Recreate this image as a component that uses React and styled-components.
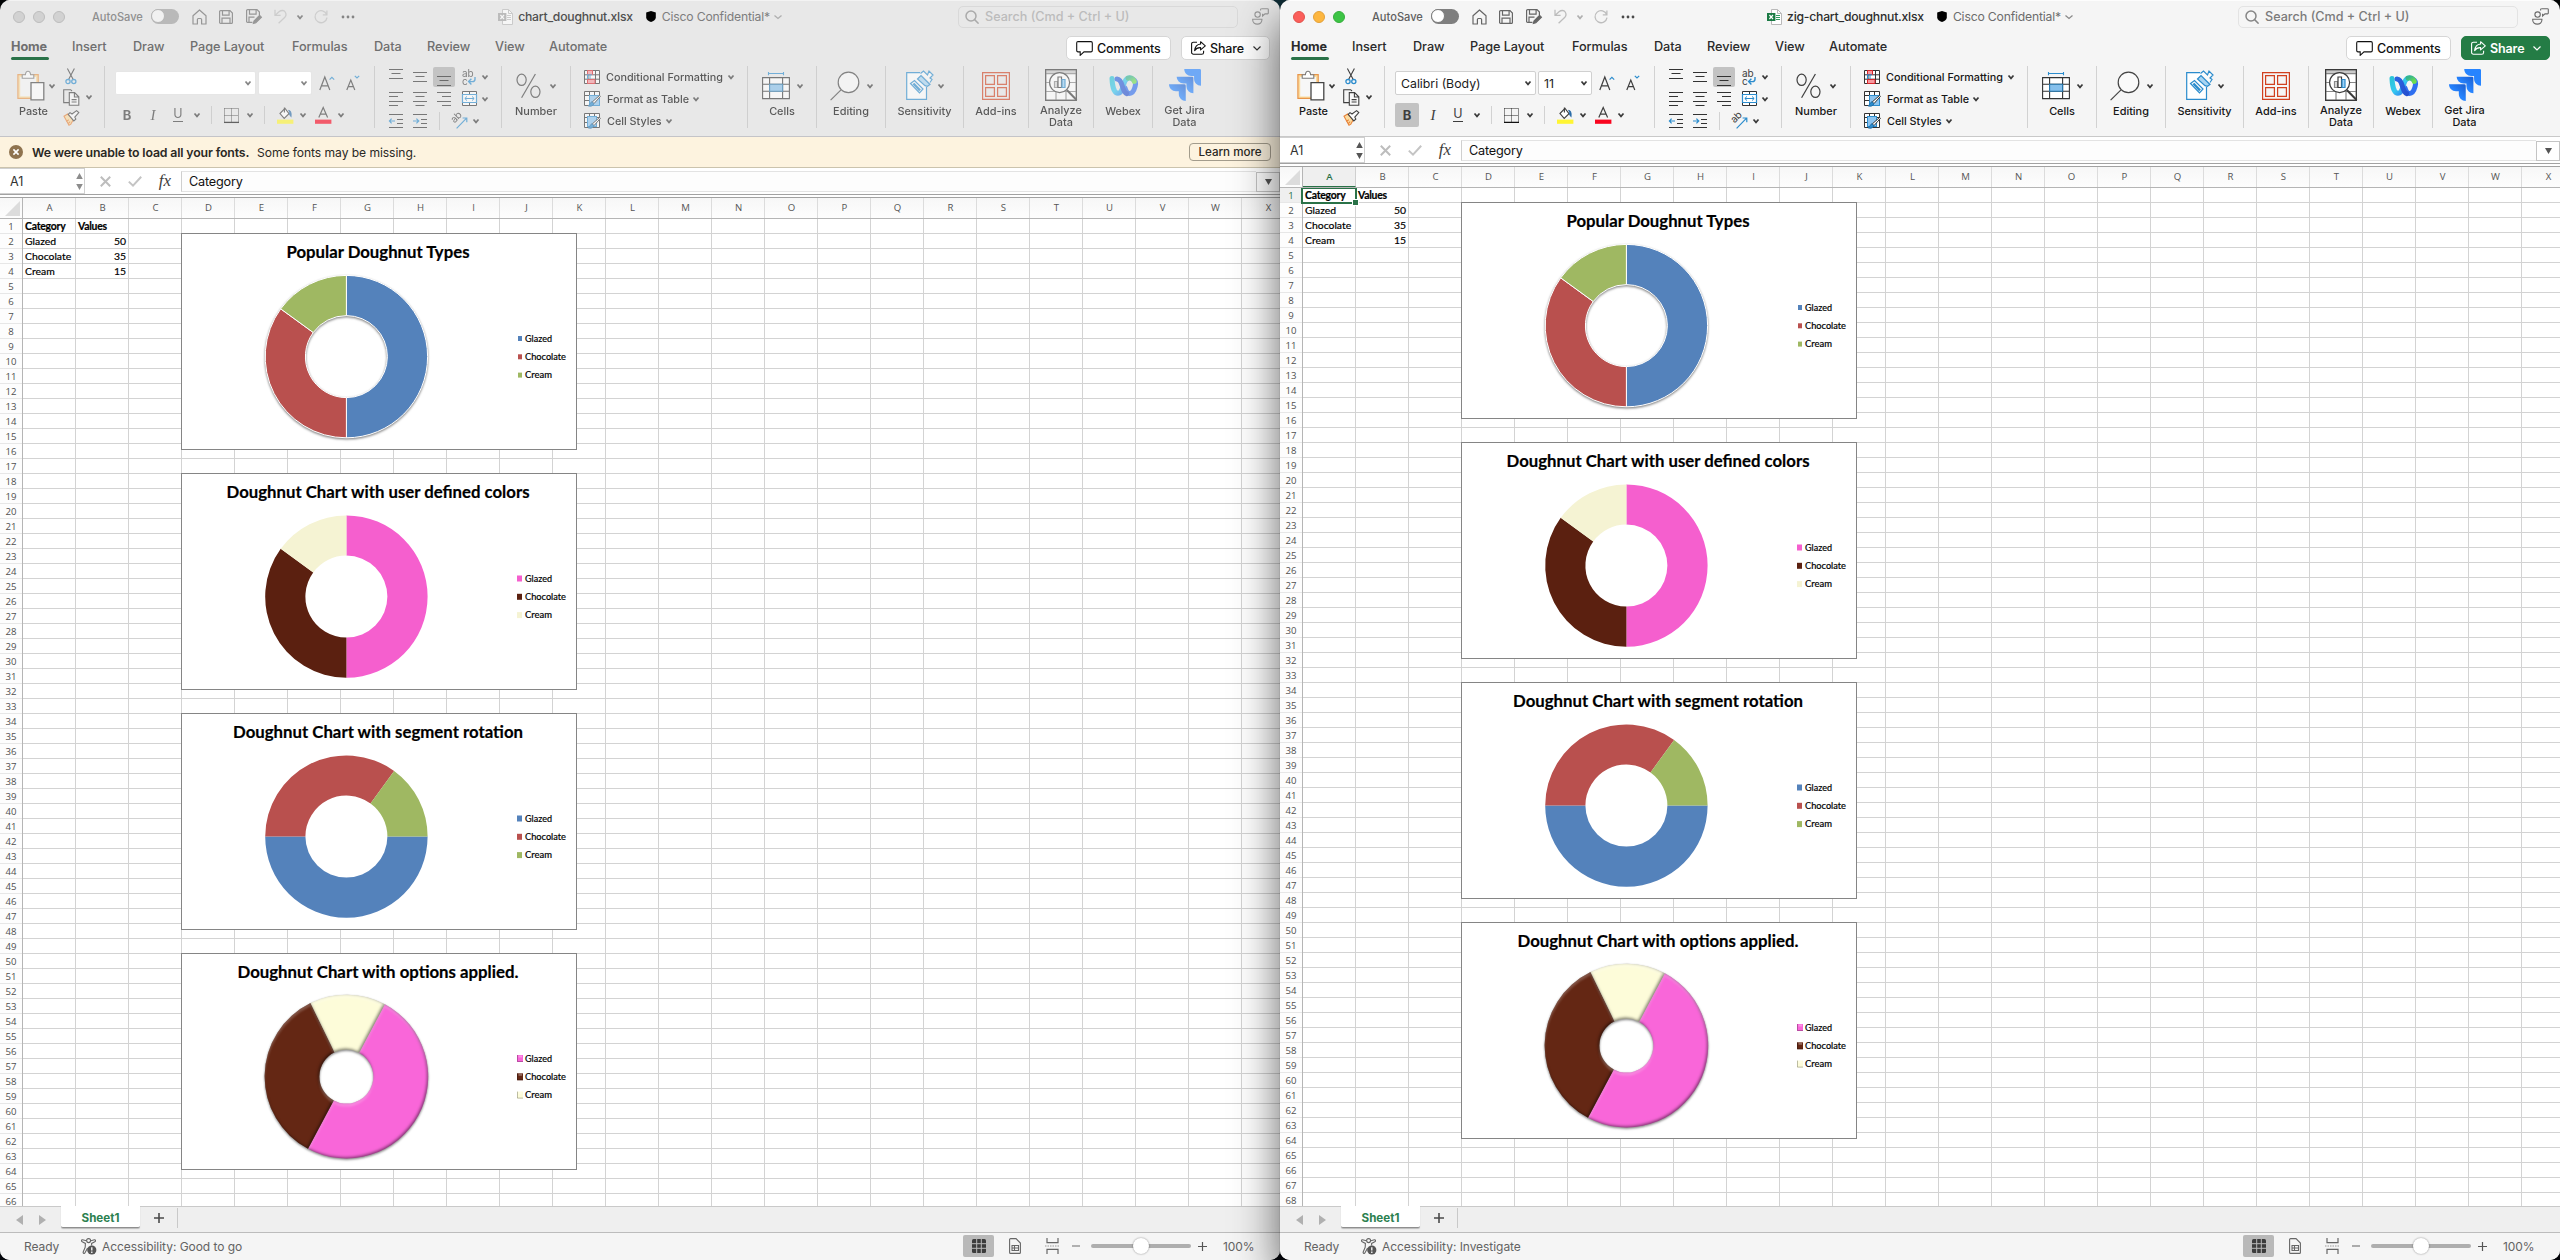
import React, { useId } from "react";
import styled, { createGlobalStyle, ThemeProvider, css } from "styled-components";

const UI = `Inter, "Liberation Sans", sans-serif`;
const CELL = `Lato, "Open Sans", sans-serif`;
const HEAD = `"Open Sans", "Noto Sans", sans-serif`;

const active = {
  on: true,
  chrome: "#f5f5f5",
  text: "#2a2a2a",
  label: "#161616",
  dim: 1,
  sep: "#d2d2d2",
  title: "#2c2c2c",
  sub: "#6c6c6c",
  search: "#7b7b7b",
  searchBorder: "#e3e3e3",
};
const inactive = {
  on: false,
  chrome: "#e8e8e8",
  text: "#6f6f6f",
  label: "#2a2a2a",
  dim: 0.62,
  sep: "#cfcfcf",
  title: "#4f4f4f",
  sub: "#7d7d7d",
  search: "#bcbcbc",
  searchBorder: "#d9d9d9",
};

const Global = createGlobalStyle`
  *, *::before, *::after { box-sizing: border-box; }
  body { margin: 0; background: #05090c; overflow: hidden; }
`;

const Desktop = styled.div`
  display: flex;
  width: 2560px;
  height: 1260px;
  overflow: hidden;
  background: linear-gradient(90deg, #020405 0%, #0e2c35 45%, #0e2c35 55%, #020405 100%) top / 100% 40px no-repeat, #03050a;
  font-family: ${UI};
`;

const Frame = styled.section`
  position: relative;
  display: flex;
  flex-direction: column;
  width: 1280px;
  height: 1260px;
  flex: none;
  border-radius: 10px;
  background: ${(p) => p.theme.chrome};
  z-index: ${(p) => (p.theme.on ? 1 : 0)};
  box-shadow: ${(p) => (p.theme.on ? "0 20px 46px rgba(0,0,0,.62), 0 0 1px rgba(0,0,0,.6)" : "none")};
`;

const Clip = styled.div`
  display: flex;
  flex-direction: column;
  height: 100%;
  border-radius: 10px;
  overflow: hidden;
`;

/* ---------- title bar ---------- */

const TitleBar = styled.header`
  display: grid;
  grid-template-columns: 400px 480px 400px;
  height: 32px;
  flex: none;
  border-top: 1px solid ${(p) => (p.theme.on ? "#fdfdfd" : "#f3f3f3")};
`;

const TitleLeft = styled.div`
  display: flex;
  align-items: center;
  padding-left: 13px;
`;

const Light = styled.i`
  width: 12px;
  height: 12px;
  margin-right: 8px;
  border-radius: 50%;
  background: ${(p) => (p.theme.on ? p.$c : "#d2d2d2")};
  border: 1px solid ${(p) => (p.theme.on ? p.$b : "#bdbdbd")};
`;

const AutoSave = styled.span`
  width: 59px;
  margin-left: 19px;
  font-size: 11.1px;
  font-weight: 500;
  color: ${(p) => (p.theme.on ? "#5f5f5f" : "#8f8f8f")};
`;

const Toggle = styled.span`
  display: flex;
  width: 28px;
  height: 15px;
  margin-right: 12px;
  border-radius: 8px;
  background: ${(p) => (p.theme.on ? "#7f7f7f" : "#b9b9b9")};
  &::before {
    content: "";
    width: 14px;
    height: 14px;
    border-radius: 50%;
    background: ${(p) => (p.theme.on ? "#fff" : "#f1f1f1")};
    border: 1px solid ${(p) => (p.theme.on ? "#7c7c7c" : "#b5b5b5")};
  }
`;

const Slot = styled.span`
  display: flex;
  align-items: center;
  justify-content: ${(p) => (p.$start ? "flex-start" : "center")};
  flex: none;
  width: ${(p) => p.$w}px;
  height: ${(p) => (p.$h ? p.$h + "px" : "auto")};
`;

const Svg = styled.svg`
  display: block;
  flex: none;
  overflow: visible;
  opacity: ${(p) => p.theme.dim};
`;

const Doc = styled.div`
  display: flex;
  align-items: center;
  justify-content: center;
  white-space: nowrap;
`;

const FileName = styled.span`
  margin: 0 13px 0 5px;
  font-size: 12.2px;
  font-weight: 500;
  letter-spacing: -0.22px;
  color: ${(p) => p.theme.title};
`;

const Confidential = styled.span`
  margin: 0 4px 0 6px;
  font-size: 12.2px;
  letter-spacing: -0.18px;
  color: ${(p) => p.theme.sub};
`;

const TitleRight = styled.div`
  display: flex;
  align-items: center;
  padding-left: 78px;
`;

const Search = styled.div`
  display: flex;
  align-items: center;
  gap: 6px;
  width: 280px;
  height: 22px;
  margin-right: 14px;
  padding-left: 6px;
  border: 1px solid ${(p) => p.theme.searchBorder};
  border-radius: 5px;
  font-size: 12.6px;
  font-weight: 500;
  color: ${(p) => p.theme.search};
`;

/* ---------- tabs ---------- */

const TabRow = styled.nav`
  display: flex;
  justify-content: space-between;
  height: 34px;
  flex: none;
  padding: 4px 10px 0 11px;
`;

const Tabs = styled.div`
  display: flex;
`;

const Tab = styled.span`
  display: flex;
  align-items: center;
  width: ${(p) => p.$w}px;
  height: 21px;
  font-size: 12.7px;
  font-weight: ${(p) => (p.$on ? 700 : 500)};
  letter-spacing: ${(p) => (p.$on ? "-0.1px" : "-0.05px")};
  white-space: nowrap;
  color: ${(p) => p.theme.text};
`;

const HomeTab = styled.div`
  width: 61px;
  &::after {
    content: "";
    display: block;
    width: 38px;
    height: 3px;
    border-radius: 2px;
    background: #2a7248;
  }
`;

const Actions = styled.div`
  display: flex;
  gap: 10px;
`;

const ActionButton = styled.button`
  display: flex;
  align-items: center;
  gap: 4px;
  width: ${(p) => p.$w}px;
  height: 24px;
  padding: 0 0 0 9px;
  border: 1px solid ${(p) => (p.$primary ? "#247c45" : "#d6d6d6")};
  border-radius: 5px;
  background: ${(p) => (p.$primary ? "#247c45" : "#fff")};
  color: ${(p) => (p.$primary ? "#fff" : "#111")};
  font: ${(p) => (p.$primary ? 600 : 500)} 12.5px ${UI};
  letter-spacing: -0.12px;
`;

/* ---------- ribbon ---------- */

const Ribbon = styled.div`
  display: flex;
  height: 71px;
  flex: none;
  border-bottom: 1px solid ${(p) => (p.theme.on ? "#c9c9c9" : "#c4c4c8")};
`;

const Group = styled.div`
  display: flex;
  flex-direction: ${(p) => (p.$col ? "column" : "row")};
  width: ${(p) => p.$w}px;
  height: 62px;
  flex: none;
  border-right: ${(p) => (p.$last ? "none" : `1px solid ${p.theme.sep}`)};
`;

const BigButton = styled.div`
  display: flex;
  flex-direction: column;
  align-items: center;
  width: 100%;
`;

const BigIcon = styled.div`
  display: flex;
  align-items: center;
  justify-content: center;
  gap: ${(p) => p.$gap || 7}px;
  height: 39px;
`;

const Label = styled.span`
  font-size: 10.9px;
  line-height: 12px;
  font-weight: 500;
  text-align: center;
  white-space: pre;
  color: ${(p) => p.theme.label};
  opacity: ${(p) => (p.theme.on ? 1 : 0.75)};
`;

const PasteCol = styled.div`
  display: flex;
  flex-direction: column;
  width: 58px;
  padding-left: 17px;
`;

const PasteIcon = styled.div`
  display: flex;
  align-items: center;
  gap: 4px;
  height: 39px;
`;

const PasteLabel = styled(Label)`
  text-align: left;
  padding-left: 2px;
`;

const ClipCol = styled.div`
  display: flex;
  flex-direction: column;
  width: 34px;
  padding-left: 5px;
`;

const ClipRow = styled.div`
  display: flex;
  align-items: center;
  gap: 6px;
  height: 21.5px;
`;

const FontRow = styled.div`
  display: flex;
  align-items: center;
  height: 24px;
  margin: 5px 0 0 10px;
`;

const FormatRow = styled(FontRow)`
  margin-top: 8px;
`;

const Combo = styled.div`
  display: flex;
  align-items: center;
  justify-content: space-between;
  width: ${(p) => p.$w}px;
  height: 24px;
  margin-right: ${(p) => p.$mr}px;
  padding: 0 4px 0 5px;
  border: 1px solid ${(p) => (p.theme.on ? "#d0d0d0" : "#e6e6e6")};
  border-radius: 2px;
  background: #fff;
  font-size: 12.3px;
  color: #1b1b1b;
`;

const Toggled = styled.span`
  display: flex;
  align-items: center;
  justify-content: center;
  width: ${(p) => p.$w}px;
  height: ${(p) => p.$h}px;
  border-radius: 2px;
  background: ${(p) => (p.$on ? "#c3c3c3" : "transparent")};
`;

const Glyph = styled.span`
  font-size: ${(p) => p.$s || 13}px;
  line-height: 1;
  font-weight: ${(p) => p.$b || 400};
  font-style: ${(p) => (p.$i ? "italic" : "normal")};
  font-family: ${(p) => (p.$serif ? `"Liberation Serif", serif` : UI)};
  color: #3d3d3d;
  opacity: ${(p) => p.theme.dim};
  ${(p) => p.$u && css`border-bottom: 1px solid #3d3d3d;`}
`;

const Divider = styled.i`
  width: 1px;
  height: ${(p) => p.$h}px;
  background: ${(p) => p.theme.sep};
`;

const AlignRow = styled.div`
  display: flex;
  align-items: center;
  height: ${(p) => p.$h}px;
  flex: none;
  padding-left: 9px;
`;

const StyleRow = styled.div`
  display: flex;
  align-items: center;
  height: 22px;
  flex: none;
  padding-left: 13px;
  gap: 6px;
`;

const StyleText = styled.span`
  width: ${(p) => p.$w}px;
  font-size: 10.8px;
  font-weight: 500;
  white-space: nowrap;
  color: ${(p) => p.theme.label};
  opacity: ${(p) => (p.theme.on ? 1 : 0.75)};
`;

/* ---------- bars ---------- */

const Warning = styled.div`
  display: flex;
  align-items: center;
  height: 31px;
  flex: none;
  padding: 0 9px;
  background: #fdf3df;
  border-bottom: 1px solid #cbc3ad;
  color: #2a2824;
  font-size: 12.3px;
`;

const WarningStrong = styled.b`
  width: 225px;
  margin-left: 9px;
  font-weight: 600;
  letter-spacing: -0.14px;
  white-space: nowrap;
`;

const WarningText = styled.span`
  font-size: 12.1px;
  letter-spacing: -0.06px;
`;

const LearnMore = styled.button`
  width: 82px;
  height: 18px;
  margin-left: auto;
  padding: 0;
  border: 1px solid #a39c8c;
  border-radius: 4px;
  background: transparent;
  color: #2a2824;
  font: 500 11.6px ${UI};
`;

const FormulaBar = styled.div`
  display: flex;
  height: 30px;
  flex: none;
  background: #fff;
  border-bottom: 1px solid #a2a2a2;
`;

const FormulaMain = styled.div`
  display: flex;
  width: 100%;
  height: 27px;
  border-bottom: 1px solid #a2a2a2;
`;

const NameBox = styled.div`
  display: flex;
  align-items: center;
  justify-content: space-between;
  width: 85px;
  height: 26px;
  padding: 0 1px 0 10px;
  border: 1px solid #d0d0d0;
  border-left: none;
  font-size: 12.6px;
  color: #333;
`;

const Tools = styled.div`
  display: flex;
  align-items: center;
  width: 96px;
  padding-left: 5px;
`;

const Fx = styled.span`
  width: 34px;
  text-align: center;
  font: italic 17px "Liberation Serif", serif;
  color: #3d3d3d;
`;

const FormulaInput = styled.div`
  display: flex;
  align-items: center;
  width: 1075px;
  height: 21px;
  margin-top: 3px;
  padding-left: 7px;
  border: 1px solid #e3e3e3;
  border-left-color: #cfcfcf;
  border-right: none;
  background: #fdfdfd;
  font-size: 12.7px;
  letter-spacing: -0.22px;
  color: #111;
`;

const DropButton = styled.span`
  display: flex;
  align-items: center;
  justify-content: center;
  width: 24px;
  height: 20px;
  margin-top: 4px;
  border: 1px solid #c4c4c4;
  background: #fff;
`;

/* ---------- sheet ---------- */

const ColumnHeads = styled.div`
  display: flex;
  height: 21px;
  flex: none;
  border-bottom: 1px solid #b5b5b5;
  background: linear-gradient(#f7f7f7, #fdfdfd);
  overflow: hidden;
`;

const Corner = styled.div`
  display: flex;
  justify-content: flex-end;
  align-items: flex-end;
  width: 23px;
  flex: none;
  padding: 0 2px 2px 0;
  border-right: 1px solid #b5b5b5;
`;

const ColumnHead = styled.div`
  display: flex;
  align-items: center;
  justify-content: center;
  width: 53px;
  flex: none;
  padding: 0 0 ${(p) => (p.$on ? 1 : 2)}px 1px;
  border-right: 1px solid ${(p) => (p.$on ? "#cfcfcf" : "#dcdcdc")};
  border-bottom: ${(p) => (p.$on ? "1px solid #2a7248" : "none")};
  background: ${(p) => (p.$on ? "#efefef" : "transparent")};
  font: ${(p) => (p.$on ? 600 : 500)} 9.6px ${HEAD};
  color: ${(p) => (p.$on ? "#2a7248" : "#555")};
`;

const Sheet = styled.div`
  position: relative;
  display: flex;
  flex: 1;
  min-height: 0;
  overflow: hidden;
  background: #fff;
`;

const RowHeads = styled.div`
  width: 23px;
  flex: none;
  border-right: 1px solid #b5b5b5;
  background: #fdfdfd;
`;

const RowHead = styled.div`
  height: 15px;
  border-bottom: 1px solid #e7e7e7;
  text-align: center;
  font: 500 9.6px/15px ${HEAD};
  color: ${(p) => (p.$on ? "#2a7248" : "#505050")};
  background: ${(p) => (p.$on ? "#efefef" : "transparent")};
`;

const Cells = styled.div`
  flex: 1;
  background:
    repeating-linear-gradient(90deg, transparent 0 52px, #d3d3d3 52px 53px),
    repeating-linear-gradient(180deg, transparent 0 14px, #d3d3d3 14px 15px);
`;

const DataRow = styled.div`
  display: grid;
  grid-template-columns: 53px 53px;
  height: 15px;
`;

const Cell = styled.span`
  padding: 0 3px 0 2px;
  font: ${(p) => (p.$b ? 700 : 400)} 10.4px/14px ${CELL};
  text-align: ${(p) => (p.$r ? "right" : "left")};
  letter-spacing: ${(p) => (p.$b ? "-0.22px" : "0")};
  white-space: nowrap;
  color: #000;
  -webkit-text-stroke: 0.2px #000;
`;

const Selection = styled.div`
  position: absolute;
  left: 21px;
  top: -1px;
  width: 56px;
  height: 17px;
  border: 2px solid #2a7248;
  &::after {
    content: "";
    position: absolute;
    right: -3px;
    bottom: -3px;
    width: 5px;
    height: 5px;
    background: #2a7248;
    box-shadow: 0 0 0 1px #fff;
  }
`;

const ChartBox = styled.figure`
  position: absolute;
  left: 181px;
  top: ${(p) => p.$top}px;
  width: 396px;
  height: 217px;
  margin: 0;
  border: 1px solid #858585;
  background: #fff;
`;

const ChartSvg = styled.svg`
  display: block;
  margin: -1px;
`;

/* ---------- footer ---------- */

const SheetTabs = styled.div`
  display: flex;
  height: 27px;
  flex: none;
  border-top: 1px solid #c9c9c9;
  border-bottom: 1px solid #bcbcbc;
  background: #efefef;
`;

const Arrows = styled.div`
  display: flex;
  align-items: center;
  justify-content: center;
  gap: 16px;
  width: 61px;
  padding-top: 1px;
`;

const SheetTab = styled.div`
  display: flex;
  align-items: center;
  justify-content: center;
  width: 79px;
  height: 22px;
  margin-top: -1px;
  padding-top: 3px;
  border-bottom: 1px solid #8f8f8f;
  border-radius: 0 0 2px 2px;
  background: #fff;
  box-shadow: 0 1px 1px rgba(0, 0, 0, 0.22);
  font-size: 11.6px;
  font-weight: 700;
  color: #2b8150;
`;

const AddSheet = styled.div`
  display: flex;
  align-items: center;
  justify-content: center;
  width: 38px;
  height: 20px;
  margin-top: 1px;
  border-right: 1px solid #c9c9c9;
`;

const Status = styled.footer`
  display: flex;
  align-items: center;
  height: 27px;
  flex: none;
  padding: 0 25px 1px 24px;
  background: #f5f5f5;
  font-size: 12px;
  color: #636363;
`;

const StatusText = styled.span`
  width: ${(p) => p.$w}px;
  white-space: nowrap;
  letter-spacing: -0.05px;
`;

const Views = styled.div`
  display: flex;
  align-items: center;
  margin-left: auto;
`;

const ViewOn = styled.span`
  display: flex;
  align-items: center;
  justify-content: center;
  width: 31px;
  height: 22px;
  border-radius: 2px;
  background: #b9b9b9;
`;

const Track = styled.div`
  display: flex;
  align-items: center;
  justify-content: center;
  width: 100px;
  height: 4px;
  margin: 0 6px 0 7px;
  border-radius: 2px;
  background: #aeaeae;
`;

const Knob = styled.i`
  width: 16px;
  height: 16px;
  border-radius: 50%;
  background: #fff;
  box-shadow: 0 0 2px rgba(0, 0, 0, 0.45);
`;

const Percent = styled.span`
  width: 32px;
  margin-left: 16px;
  letter-spacing: -0.1px;
`;

/* ---------- icons ---------- */

const Ic = ({ w, h, children, ...rest }) => (
  <Svg width={w} height={h} viewBox={`0 0 ${w} ${h}`} fill="none" stroke="#3f3f3f" strokeWidth="1" {...rest}>
    {children}
  </Svg>
);

const Chev = ({ c = "#3a3a3a", sw = 1.7, w = 6 }) => (
  <Ic w={w} h={4} stroke={c} strokeWidth={sw}>
    <path d={`M.5 .5 L${w / 2} 3.4 L${w - 0.5} .5`} />
  </Ic>
);

const grey = "#666";

const HomeIcon = () => (
  <Ic w={15} h={16} stroke={grey} strokeWidth="1.2">
    <path d="M1 6.8 7.5 1 14 6.8V15H9.6V10.5a1 1 0 0 0-1-1H6.4a1 1 0 0 0-1 1V15H1Z" strokeLinejoin="round" />
  </Ic>
);
const SaveIcon = () => (
  <Ic w={14} h={14} stroke={grey} strokeWidth="1.2">
    <path d="M1.6.6H11l2.4 2.4v9.4a1 1 0 0 1-1 1H1.6a1 1 0 0 1-1-1V1.6a1 1 0 0 1 1-1ZM3.5.8v4.4h6.6V.8M3 13.2V8.2h8v5" />
  </Ic>
);
const SaveEditIcon = () => (
  <Ic w={16} h={15} stroke={grey} strokeWidth="1.2">
    <path d="M6.5 13.4H1.6a1 1 0 0 1-1-1V1.6a1 1 0 0 1 1-1H11l2.4 2.4v3M3.5.8v4.4h6.6V.8M3 13.2V8.2h5.5" />
    <path d="m13.6 6.4 1.8 1.8-5.6 5.6-2.4.7.6-2.5Z" fill={grey} stroke={grey} />
  </Ic>
);
const UndoIcon = () => (
  <Ic w={13} h={15} stroke="#bdbdbd" strokeWidth="1.3">
    <path d="M1 .8V6.4H6.6M1.2 6.2 5 2.8C7.5.8 10 1.3 11.2 3c1.3 2 .9 4-.6 5.6L4.6 14.2" />
  </Ic>
);
const RedoIcon = () => (
  <Ic w={14} h={14} stroke="#bdbdbd" strokeWidth="1.3">
    <path d="M12.9 .6V4.8H8.8M12.7 4.6A6 6 0 1 0 13 7.6" />
  </Ic>
);
const MoreIcon = () => (
  <Ic w={14} h={4} stroke="none" fill="#4a4a4a">
    <circle cx="2" cy="2" r="1.4" /><circle cx="7" cy="2" r="1.4" /><circle cx="12" cy="2" r="1.4" />
  </Ic>
);
const FileIcon = ({ on }) => (
  <Ic w={15} h={16} stroke="#b9b9b9">
    <path d="M4.5.5H10.5L14.5 4.5V15.5H4.5Z" fill="#fff" />
    <path d="M10.5.5V4.5H14.5" />
    <path d="M9 6.5h4M9 8.5h4M9 10.5h4" stroke={on ? "#2f9a5f" : "#bbb"} />
    <rect x="0" y="4" width="8.4" height="8" fill={on ? "#1b7a44" : "#a0a0a0"} stroke="none" />
    <path d="m2.4 6 3.6 4M6 6 2.4 10" stroke="#fff" strokeWidth="1.2" />
  </Ic>
);
const Shield = () => (
  <svg width="10" height="11" viewBox="0 0 10 11"><path d="M5 0 9.8 1.6V6.2C9.8 8.6 7.6 10.2 5 11 2.4 10.2.2 8.6.2 6.2V1.6Z" fill="#000" /></svg>
);
const SearchIcon = ({ c }) => (
  <svg width="14" height="14" viewBox="0 0 14 14" fill="none" stroke={c} strokeWidth="1.5">
    <circle cx="6" cy="6" r="5" /><path d="m9.6 9.6 4 4" />
  </svg>
);
const PersonIcon = () => (
  <Ic w={17} h={17} stroke="#6a6a6a" strokeWidth="1.1">
    <circle cx="5.6" cy="6.6" r="2.7" />
    <path d="M.7 11.3h9.2v.8c0 2.3-2 4-4.6 4S.7 14.4.7 12.1Z" />
    <path d="M9.3.7h6.2a.8.8 0 0 1 .8.8v3.6a.8.8 0 0 1-.8.8H13L10.6 8V5.8" />
    <path d="M8.6 2.6V1.5A.8.8 0 0 1 9.3.7" />
  </Ic>
);
const CommentIcon = () => (
  <svg width="17" height="15" viewBox="0 0 17 15" fill="none" stroke="#111" strokeWidth="1.1">
    <path d="M2 .6H15a1.3 1.3 0 0 1 1.3 1.3V9.6A1.3 1.3 0 0 1 15 10.9H8L4.2 14.3V10.9H2A1.3 1.3 0 0 1 .7 9.6V1.9A1.3 1.3 0 0 1 2 .6Z" />
  </svg>
);
const ShareIcon = ({ c }) => (
  <svg width="15" height="14" viewBox="0 0 15 14" fill="none" stroke={c} strokeWidth="1.1" strokeLinejoin="round">
    <path d="M6 1.2H2.4A1.8 1.8 0 0 0 .6 3v8.4a1.8 1.8 0 0 0 1.8 1.8h8.4a1.8 1.8 0 0 0 1.8-1.8V9.8" />
    <path d="M9.6.7 14.3 4.8 9.6 8.9V6.6C6.6 6.4 5 7.4 3.6 9.6 4 5.8 6 3.4 9.6 3Z" />
  </svg>
);

const PasteSvg = () => (
  <Ic w={28} h={31}>
    <path d="M.9 4.6H21.2V28.3H.9Z" fill="#fbdca0" stroke="#e8954a" strokeWidth="1.2" />
    <path d="M3.2 7H19V26.4H3.2Z" fill="#f7f7f7" stroke="none" />
    <path d="M5.2 8.3V4.8H8.4C8.6 2.4 9.4 1.2 11 1.2s2.4 1.2 2.6 3.6h3.2V8.3Z" fill="#fff" stroke="#7a7a7a" strokeWidth="1.1" />
    <path d="M14 12.6H26.8V29.8H14Z" fill="#fff" stroke="#444" strokeWidth="1.3" />
  </Ic>
);
const CutSvg = () => (
  <Ic w={12} h={17}>
    <path d="M2.4 .5 8.2 11.6M9.4 .5 3.6 11.6" strokeWidth="1.1" />
    <circle cx="3" cy="13.6" r="2.1" stroke="#2b8ccd" strokeWidth="1.3" />
    <circle cx="8.8" cy="13.6" r="2.1" stroke="#2b8ccd" strokeWidth="1.3" />
  </Ic>
);
const CopySvg = () => (
  <Ic w={17} h={17} strokeWidth="1.1">
    <path d="M6 13.6H.7V.7H7.6L9 2" />
    <path d="M6.3 3.6H11.6L15.8 7.8V16.2H6.3ZM11.4 3.8V8h4.4M8.6 10.6h5M8.6 13h5" fill="#fafafa" />
  </Ic>
);
const BrushSvg = () => (
  <Ic w={17} h={16} strokeWidth="1.1">
    <path d="M1 6.2 4.6 4 10.2 9.8 7.8 14.2 6 15.2Z" fill="#fbdca0" stroke="#e8833a" />
    <path d="m3.4 11.4 2.4-1.6M5.2 13.6l2-2" stroke="#e8833a" />
    <path d="M5.2 4.4 7 2.6l2 1.4L13.6.6l2.2 1.9-4 4.6 1 2-2 1.8Z" fill="#fafafa" />
  </Ic>
);
const GrowFont = ({ down }) => (
  <Ic w={16} h={16} strokeWidth="1.2">
    {down ? (
      <>
        <path d="M.8 15 4.8 5 8.800 15M2.200 11.600H7.400" />
        <path d="m8.8 .8 2.2 2.200L13.200 .8" stroke="#2b8ccd" />
      </>
    ) : (
      <>
        <path d="M.8 15 5.8 2 10.8 15M2.6 10.8H9" />
        <path d="m10.6 4.6 2.3-2.2 2.3 2.2" stroke="#2b8ccd" />
      </>
    )}
  </Ic>
);
const BorderSvg = () => (
  <Ic w={15} h={15}>
    <path d="M.5 .5H14.5M.5 7.5H14.5M.5 .5V14M7.5 .5V14M14.5 .5V14" strokeDasharray="1 1" stroke="#222" />
    <path d="M0 14.4H15" strokeWidth="1.3" stroke="#111" />
  </Ic>
);
const BucketSvg = () => (
  <Ic w={17} h={17} strokeWidth="1.1">
    <path d="M3 6.5 8 1.4 12 6.6 7.2 11.4Z" fill="#fff" />
    <path d="M7.4 .6v4.8" />
    <path d="M11.4 3.4c2.4.4 3 2.4 2.6 6-1.4-1-1.6-2.4-1.6-3.8" fill="#2b6ca8" stroke="#2b6ca8" />
    <rect x="0" y="12.6" width="16.4" height="4.2" fill="#fff533" stroke="none" />
  </Ic>
);
const FontColorSvg = () => (
  <Ic w={17} h={17} strokeWidth="1.2">
    <path d="M3.8 10.6 8.2 .6 12.6 10.6M5.4 7.2h5.6" />
    <rect x="0" y="12.6" width="16.4" height="4.2" fill="#f9051f" stroke="none" />
  </Ic>
);

const VAlign = ({ y }) => (
  <Ic w={14} h={18} stroke="#333">
    <path d={`M0 ${y + 0.5}H14M2.5 ${y + 4.5}H11.5M0 ${y + 9.5}H14`} />
  </Ic>
);
const HAlign = ({ x }) => (
  <Ic w={14} h={14} stroke="#333">
    <path d={`M0 .5H14M${x} 4.5H${x + 9}M0 9.5H14M${x} 13.5H${x + 9}`} />
  </Ic>
);
const Indent = ({ inward }) => (
  <Ic w={14} h={14} stroke="#333">
    <path d="M0 .5H14M8 5.5H14M8 9.5H14M0 13.5H14" />
    <path d={inward ? "M0 7H5.6M3.4 4.6 5.8 7 3.4 9.4" : "M.4 7H6M2.6 4.6 .4 7 2.6 9.4"} stroke="#2b8ccd" strokeWidth="1.2" />
  </Ic>
);
const IcText = styled.text`
  font-family: ${UI};
  fill: #3f3f3f;
  stroke: none;
`;
const WrapSvg = () => (
  <Ic w={15} h={17}>
    <IcText x="0" y="8" fontSize="10">ab</IcText>
    <IcText x="0" y="15.6" fontSize="10">c</IcText>
    <path d="M13 8v2.2c0 1.8-1 2.4-2.6 2.4H7M9.4 9.8 6.6 12.6l2.8 2.8" stroke="#2b8ccd" strokeWidth="1.4" />
  </Ic>
);
const MergeSvg = () => (
  <Ic w={15} h={15}>
    <path d="M.5 .5H14.5V14.5H.5Z" fill="#fff" stroke="#333" />
    <path d="M7.5 .5V3M7.5 12V14.5" stroke="#333" />
    <path d="M.5 3.5H14.5V11.5H.5Z" fill="#fff" stroke="#2b8ccd" strokeWidth="1.2" />
    <path d="M3 7.5H12M5 5.4 2.8 7.5 5 9.6M10 5.4l2.2 2.1L10 9.6" stroke="#2b8ccd" />
  </Ic>
);
const OrientSvg = () => (
  <Ic w={17} h={16}>
    <IcText x="0" y="0" fontSize="10" transform="translate(3.4 10.6) rotate(-45)">ab</IcText>
    <path d="M5.6 15.4 15.6 5.2M11.6 5H15.8V9.2" stroke="#2b8ccd" strokeWidth="1.2" />
  </Ic>
);
const PercentSvg = () => (
  <Ic w={25} h={26} strokeWidth="1.2">
    <ellipse cx="5.6" cy="6.8" rx="4.6" ry="5.6" /><ellipse cx="19.4" cy="18.8" rx="4.6" ry="5.6" />
    <path d="M19.4 1 5.6 24.8" />
  </Ic>
);
const CondSvg = () => (
  <Ic w={16} h={14} stroke="#333">
    <path d="M.5 .5H15.5V13.5H.5ZM.5 4.8H15.5M.5 9.2H15.5M11.5 .5V13.5M4 .5V13.5" fill="#fff" />
    <path d="M3.5 .5H8.5V4.5H3.5ZM3.5 9.5H11V13.5H3.5Z" fill="#f69aa0" stroke="#d8262c" />
    <path d="M3.5 5V9M3 4.8h5M6 5v4" stroke="#2b8ccd" />
  </Ic>
);
const TableSvg = ({ full }) => (
  <Ic w={17} h={16} stroke="#333">
    <path d="M.5 .5H15.5V14.5H.5ZM.5 4.5H15.5M.5 9.5H6M5.5 .5V14.5M10.5 .5V5" fill="#fff" />
    <rect x={full ? 3.5 : 5.5} y={full ? 3.5 : 4.5} width={full ? 9 : 10} height="10" fill="#8cc4f0" stroke="#2b8ccd" />
    <path d="M15.6 4.4 16.4 5.4 10 12.6 8.2 11Z" fill="#fff" />
    <path d="M8 10.8c-2 .4-1.6 3-4 4 2.4.9 5.6.2 5.800-2.2Z" fill="#2b8ccd" stroke="#1f6ca6" />
  </Ic>
);
const CellsSvg = () => (
  <Ic w={28} h={28} stroke="#333" strokeWidth="1.1">
    <path d="M.6 5.6H27.4V26.6H.6ZM.6 12.3H27.4M.6 19.3H27.4M7.6 5.6V26.6M20.6 5.6V26.6" fill="#fff" />
    <path d="M7.6 12.3H20.6V19.3H7.6Z" fill="#86c0ec" stroke="#2374ab" />
    <path d="M6.5 1.5H21.5M6.5 0V3.2M21.5 0V3.2" stroke="#2b8ccd" />
  </Ic>
);
const EditSvg = () => (
  <Ic w={30} h={30} stroke="#444" strokeWidth="1.2">
    <circle cx="18.5" cy="11.4" r="10.3" fill="#fafafa" /><path d="M11 18.8.6 29.2" />
  </Ic>
);
const SensSvg = () => (
  <Ic w={28} h={31} stroke="#2b8ccd" strokeWidth="1.2">
    <path d="M14 2.6H.7V29.4H20.5V17" fill="#fff" />
    <path d="m4.5 13.5 4-3 8.5 8.5-3.5 3.8Z" fill="#fafafa" /><path d="m7.4 13.5 6.6 6.8" strokeWidth="2.4" />
    <path d="m11.5 9 3.500-3.500 9 9-2.600 1.800-2.400-.6Z" fill="#a9d5f2" />
    <path d="m14.5 3.500 3-2.500 4 4 1.500-4 4 4-3 3 2 1.500-2 3" fill="#fafafa" />
  </Ic>
);
const AddinSvg = () => (
  <Ic w={28} h={28} stroke="#d1401f" strokeWidth="1.2">
    <path d="M.6 .6H27.4V27.4H.6ZM3.6 3.6H12.4V12.4H3.6ZM15.6 3.6H24.4V12.4H15.6ZM3.6 15.6H12.4V24.4H3.6ZM15.6 15.6H24.4V24.4H15.6Z" />
  </Ic>
);
const AnalyzeSvg = () => (
  <Ic w={32} h={32} stroke="#3a3a3a" strokeWidth="1.2">
    <path d="M.6 .6H31.4V31.4H.6Z" fill="#fff" />
    <path d="M.6 .6H31.4V4.6H.6Z" fill="#c9c9c9" stroke="#888" />
    <path d="M.6 13.5H31.4M.6 22.5H31.4M11 22.5V31.4M21 22.5V31.4" stroke="#888" />
    <path d="M.6 .6H31.4V31.4H.6Z" />
    <circle cx="14.6" cy="13.6" r="10" fill="#fff" />
    <path d="M9.5 12.5H12.5V18.5H9.5Z" fill="#ddd" stroke="#888" />
    <path d="M13 8H16.5V18.5H13Z" fill="#fff" /><path d="M17 10.5H20V18.5H17Z" fill="#9ed0f3" stroke="#2b8ccd" />
    <path d="m21.8 21 9.8 10" strokeWidth="2" />
  </Ic>
);
const WebexSvg = () => {
  const id = useId();
  return (
    <Ic w={29} h={21} strokeWidth="5" strokeLinecap="round">
      <defs>
        <linearGradient id={id + "a"} x1="0" y1="0" x2="1" y2="1"><stop offset="0" stopColor="#2ac4d8" /><stop offset=".5" stopColor="#35c8f0" /><stop offset="1" stopColor="#2f6ff0" /></linearGradient>
        <linearGradient id={id + "b"} x1="0" y1="0" x2="1" y2="1"><stop offset="0" stopColor="#2c63e0" /><stop offset="1" stopColor="#2450cf" /></linearGradient>
        <linearGradient id={id + "c"} x1="0" y1="0" x2="1" y2="1"><stop offset="0" stopColor="#35b58f" /><stop offset="1" stopColor="#6ee04a" /></linearGradient>
      </defs>
      <path d="M23.5 4c3 1.400 3.600 4 2.600 7.500-1.200 4.800-3.200 7-5.600 7-2.200 0-3.400-2-4.600-5.600" stroke="#2f6ff0" />
      <path d="M3 3.400C3.200 9 4.600 18.300 9 18.300c2.800 0 4-3 5.200-7.300 1-4 2.600-8 6-8" stroke={`url(#${id}a)`} />
      <path d="M8 4c3 .2 4.400 3.400 5.600 7.800 1 3.600 2 6 4.200 6.800" stroke={`url(#${id}b)`} />
      <path d="M19 3.200c2.600-1 5.400.2 6.200 3.200" stroke={`url(#${id}c)`} />
    </Ic>
  );
};
const JiraSvg = () => {
  const id = useId();
  return (
    <Svg width="32" height="32" viewBox="2 2 20 20">
      <defs><linearGradient id={id} x1="1" y1="0" x2="0.3" y2="0.8"><stop offset=".1" stopColor="#1c63d6" /><stop offset=".7" stopColor="#2684ff" /></linearGradient></defs>
      <path fill="#2684ff" d="M11.53 2c0 2.4 1.97 4.35 4.35 4.35h1.78v1.7c0 2.4 1.94 4.34 4.34 4.35V2.84a.84.84 0 0 0-.84-.84z" />
      <path fill={`url(#${id})`} d="M6.77 6.8a4.36 4.36 0 0 0 4.34 4.34h1.8v1.72a4.36 4.36 0 0 0 4.34 4.34V7.63a.84.84 0 0 0-.83-.83z" />
      <path fill={`url(#${id})`} d="M2 11.6c0 2.4 1.95 4.34 4.35 4.34h1.78v1.72c.01 2.39 1.95 4.34 4.34 4.34v-9.57a.84.84 0 0 0-.84-.83z" />
    </Svg>
  );
};
const AccessIcon = () => (
  <svg width="16" height="17" viewBox="0 0 16 17" fill="none" stroke="#666" strokeWidth="1.1">
    <path d="M5.3 2.8 1.6 1.8C.2 1.6.2 3.4 1.2 3.8L4.4 5.4 4.2 9.2 2.2 14c-.4 1.4 1.2 2 1.8.8L6.6 10M10 2.8l3.4-1c1.4-.2 1.4 1.6.4 2L10.6 5.4v2" />
    <circle cx="7.6" cy="2.6" r="2" />
    <circle cx="10.8" cy="12" r="4.6" fill="#555" stroke="none" />
    <path d="M10.8 9.2v3.4M10.8 13.6v1.4" stroke="#fff" strokeWidth="1.3" />
  </svg>
);

/* ---------- charts ---------- */

const VALUES = [50, 35, 15];
const NAMES = [["Glazed", 27], ["Chocolate", 41], ["Cream", 27]];
const OFFICE = ["#5482bb", "#b9504e", "#9fb862"];
const CUSTOM = ["#f55fce", "#5b2010", "#f5f3d3"];
const BEVEL = ["#f966d9", "#642714", "#fdfcd9"];

const CHARTS = [
  { title: "Popular Doughnut Types", tw: 183, colors: OFFICE, rot: 0, hole: 41, effect: "shadow" },
  { title: "Doughnut Chart with user defined colors", tw: 303, colors: CUSTOM, rot: 0, hole: 41 },
  { title: "Doughnut Chart with segment rotation", tw: 290, colors: OFFICE, rot: 90, hole: 41 },
  { title: "Doughnut Chart with options applied.", tw: 281, colors: BEVEL, rot: 28, hole: 27, effect: "bevel" },
];

const MARKERS = {
  shadow: { x: 337, y: 103, w: 4, h: 5 },
  plain: { x: 336, y: 102.5, w: 5, h: 6 },
  bevel: { x: 336, y: 102, w: 6, h: 7 },
};

const ring = (cx, cy, r, q, from, to) => {
  const p = (rad, deg) => {
    const a = ((deg - 90) * Math.PI) / 180;
    return `${(cx + rad * Math.cos(a)).toFixed(2)} ${(cy + rad * Math.sin(a)).toFixed(2)}`;
  };
  const big = to - from > 180 ? 1 : 0;
  return `M${p(r, from)}A${r} ${r} 0 ${big} 1 ${p(r, to)}L${p(q, to)}A${q} ${q} 0 ${big} 0 ${p(q, from)}Z`;
};

const ChartText = styled.text`
  font-family: ${CELL};
  fill: #000;
`;

function Marker({ x, y, w, h, color, bevel }) {
  return (
    <g>
      <rect x={x} y={y} width={w} height={h} fill={color} />
      {bevel && (
        <>
          <path d={`M${x + 0.5} ${y}V${y + h - 0.5}H${x + w}`} fill="none" stroke="#000" strokeOpacity=".25" />
          <rect x={x + 1.5} y={y + 0.5} width={w - 2.5} height="2" fill="#fff" fillOpacity=".3" />
        </>
      )}
    </g>
  );
}

function Doughnut({ title, tw, colors, rot, hole, effect }) {
  const id = useId();
  const bevel = effect === "bevel";
  const m = MARKERS[effect || "plain"];
  const cx = 165.4, cy = 123.6, r = bevel ? 81.8 : 81.2;
  let at = rot;
  const slices = VALUES.map((v, i) => {
    const from = at;
    at += v * 3.6;
    return { d: ring(cx, cy, r, hole, from, at), c: colors[i] };
  });
  return (
    <ChartSvg width="396" height="217" viewBox="0 0 396 217">
      <defs>
        <filter id={id + "s"} x="-10%" y="-10%" width="120%" height="120%" colorInterpolationFilters="sRGB">
          <feDropShadow dx="0" dy="1.2" stdDeviation="1.2" floodColor="#000" floodOpacity=".5" />
        </filter>
        <filter id={id + "b"} x="-10%" y="-10%" width="120%" height="120%" colorInterpolationFilters="sRGB">
          <feOffset in="SourceAlpha" dx="-.6" dy="-1.4" result="o1" />
          <feGaussianBlur in="o1" stdDeviation="1.6" result="b1" />
          <feComposite in="SourceAlpha" in2="b1" operator="out" result="edge1" />
          <feFlood floodColor="#000" floodOpacity=".5" />
          <feComposite in2="edge1" operator="in" result="dark" />
          <feOffset in="SourceAlpha" dx="0" dy="3" result="o2" />
          <feGaussianBlur in="o2" stdDeviation=".9" result="b2" />
          <feComposite in="SourceAlpha" in2="b2" operator="out" result="edge2" />
          <feFlood floodColor="#fff" floodOpacity=".22" />
          <feComposite in2="edge2" operator="in" result="light" />
          <feMerge><feMergeNode in="SourceGraphic" /><feMergeNode in="dark" /><feMergeNode in="light" /></feMerge>
        </filter>
      </defs>
      <ChartText x="197" y="25.2" fontSize="17" fontWeight="700" stroke="#000" strokeWidth=".2" textAnchor="middle" textLength={tw} lengthAdjust="spacingAndGlyphs">{title}</ChartText>
      <g filter={effect ? `url(#${id}s)` : undefined}>
        {slices.map((s) => (
          <path key={s.c} d={s.d} fill={s.c} stroke={effect === "shadow" ? "#fff" : "none"} strokeWidth="1" filter={bevel ? `url(#${id}b)` : undefined} />
        ))}
      </g>
      {NAMES.map(([n, w], i) => (
        <g key={n}>
          <Marker {...m} y={m.y + i * 18.3} color={colors[i]} bevel={bevel} />
          <ChartText x="344" y={108.6 + i * 18.4} fontSize="9.4" stroke="#000" strokeWidth=".2" textLength={w} lengthAdjust="spacingAndGlyphs">{n}</ChartText>
        </g>
      ))}
    </ChartSvg>
  );
}

/* ---------- sections ---------- */

const TABS = [["Insert", 61], ["Draw", 57], ["Page Layout", 102], ["Formulas", 82], ["Data", 53], ["Review", 68], ["View", 54], ["Automate", 60]];

function Header({ on, file }) {
  return (
    <>
      <TitleBar>
        <TitleLeft>
          <Light $c="#fb5e5a" $b="#e2524c" />
          <Light $c="#fdb63f" $b="#e3a13a" />
          <Light $c="#3dc445" $b="#35ae3c" />
          <AutoSave>AutoSave</AutoSave>
          <Toggle />
          <Slot $w={16}><HomeIcon /></Slot>
          <Slot $w={38}><SaveIcon /></Slot>
          <Slot $w={17}><SaveEditIcon /></Slot>
          <Slot $w={36}><UndoIcon /></Slot>
          <Slot $w={4}><Chev c={on ? "#b0b0b0" : "#555"} /></Slot>
          <Slot $w={37}><RedoIcon /></Slot>
          <Slot $w={18}><MoreIcon /></Slot>
        </TitleLeft>
        <Doc>
          <FileIcon on={on} />
          <FileName>{file}</FileName>
          <Shield />
          <Confidential>Cisco Confidential*</Confidential>
          <Chev c="#8a8a8a" w={8} sw={1.3} />
        </Doc>
        <TitleRight>
          <Search><SearchIcon c={on ? "#858585" : "#aaa"} />Search (Cmd + Ctrl + U)</Search>
          <PersonIcon />
        </TitleRight>
      </TitleBar>
      <TabRow>
        <Tabs>
          <HomeTab><Tab $w={61} $on>Home</Tab></HomeTab>
          {TABS.map(([t, w]) => <Tab key={t} $w={w}>{t}</Tab>)}
        </Tabs>
        <Actions>
          <ActionButton $w={105}><CommentIcon />Comments</ActionButton>
          <ActionButton $w={89} $primary={on}>
            <ShareIcon c={on ? "#fff" : "#111"} />Share
            <Slot $w={17}><svg width="8" height="5" fill="none" stroke={on ? "#fff" : "#333"} strokeWidth="1.2"><path d="M.5 .5 4 4 7.5 .5" /></svg></Slot>
          </ActionButton>
        </Actions>
      </TabRow>
      <Ribbon>
        <Group $w={105}>
          <PasteCol>
            <PasteIcon><PasteSvg /><Chev /></PasteIcon>
            <PasteLabel>Paste</PasteLabel>
          </PasteCol>
          <ClipCol>
            <ClipRow><Slot $w={16}><CutSvg /></Slot></ClipRow>
            <ClipRow><CopySvg /><Chev /></ClipRow>
            <ClipRow><BrushSvg /></ClipRow>
          </ClipCol>
        </Group>
        <Group $w={270} $col>
          <FontRow>
            <Combo $w={141} $mr={2}><span>{on ? "Calibri (Body)" : ""}</span><Chev /></Combo>
            <Combo $w={54} $mr={7}><span>{on ? "11" : ""}</span><Chev /></Combo>
            <GrowFont />
            <Slot $w={11} />
            <GrowFont down />
          </FontRow>
          <FormatRow>
            <Toggled $w={24} $h={24} $on={on}><Glyph $b={700} $s={13}>B</Glyph></Toggled>
            <Slot $w={28}><Glyph $i $serif $s={15}>I</Glyph></Slot>
            <Slot $w={22}><Glyph $u $s={12.5}>U</Glyph></Slot>
            <Slot $w={16}><Chev /></Slot>
            <Slot $w={12}><Divider $h={18} /></Slot>
            <Slot $w={29}><BorderSvg /></Slot>
            <Slot $w={8}><Chev /></Slot>
            <Slot $w={20}><Divider $h={18} /></Slot>
            <Slot $w={22}><BucketSvg /></Slot>
            <Slot $w={14}><Chev /></Slot>
            <Slot $w={26}><FontColorSvg /></Slot>
            <Slot $w={10}><Chev /></Slot>
          </FormatRow>
        </Group>
        <Group $w={127} $col>
          <AlignRow $h={22}>
            <Slot $w={24}><VAlign y={1} /></Slot>
            <Slot $w={24}><VAlign y={4} /></Slot>
            <Slot $w={24}><Toggled $w={22} $h={20} $on><VAlign y={8} /></Toggled></Slot>
            <Slot $w={26}><WrapSvg /></Slot>
            <Slot $w={6}><Chev /></Slot>
          </AlignRow>
          <AlignRow $h={21}>
            <Slot $w={24}><HAlign x={0} /></Slot>
            <Slot $w={24}><HAlign x={2.5} /></Slot>
            <Slot $w={24}><HAlign x={5} /></Slot>
            <Slot $w={26}><MergeSvg /></Slot>
            <Slot $w={6}><Chev /></Slot>
          </AlignRow>
          <AlignRow $h={23}>
            <Slot $w={24}><Indent /></Slot>
            <Slot $w={24}><Indent inward /></Slot>
            <Slot $w={15}><Divider $h={18} /></Slot>
            <Slot $w={24}><OrientSvg /></Slot>
            <Slot $w={10}><Chev /></Slot>
          </AlignRow>
        </Group>
        <Group $w={69}>
          <BigButton><BigIcon $gap={9}><PercentSvg /><Chev /></BigIcon><Label>Number</Label></BigButton>
        </Group>
        <Group $w={177} $col>
          <StyleRow><CondSvg /><StyleText $w={116}>Conditional Formatting</StyleText><Chev /></StyleRow>
          <StyleRow><TableSvg /><StyleText $w={80}>Format as Table</StyleText><Chev /></StyleRow>
          <StyleRow><TableSvg full /><StyleText $w={53}>Cell Styles</StyleText><Chev /></StyleRow>
        </Group>
        <Group $w={69}><BigButton><BigIcon><CellsSvg /><Chev /></BigIcon><Label>Cells</Label></BigButton></Group>
        <Group $w={69}><BigButton><BigIcon><EditSvg /><Chev /></BigIcon><Label>Editing</Label></BigButton></Group>
        <Group $w={78}><BigButton><BigIcon $gap={4}><SensSvg /><Chev /></BigIcon><Label>Sensitivity</Label></BigButton></Group>
        <Group $w={65}><BigButton><BigIcon><AddinSvg /></BigIcon><Label>Add-ins</Label></BigButton></Group>
        <Group $w={65}><BigButton><BigIcon><AnalyzeSvg /></BigIcon><Label>{"Analyze\nData"}</Label></BigButton></Group>
        <Group $w={59}><BigButton><BigIcon><WebexSvg /></BigIcon><Label>Webex</Label></BigButton></Group>
        <Group $w={63} $last><BigButton><BigIcon><JiraSvg /></BigIcon><Label>{"Get Jira\nData"}</Label></BigButton></Group>
      </Ribbon>
    </>
  );
}

const COLS = "ABCDEFGHIJKLMNOPQRSTUVWX".split("");
const DATA = [["Category", "Values"], ["Glazed", "50"], ["Chocolate", "35"], ["Cream", "15"]];

function Excel({ on, file, rows, access, warning }) {
  return (
    <ThemeProvider theme={on ? active : inactive}>
      <Frame>
        <Clip>
          <Header on={on} file={file} />
          {warning && (
            <Warning>
              <svg width="14" height="14" viewBox="0 0 14 14"><circle cx="7" cy="7" r="7" fill="#8f734f" /><path d="m4.4 4.4 5.2 5.2M9.6 4.4 4.4 9.6" stroke="#fff" strokeWidth="1.6" /></svg>
              <WarningStrong>We were unable to load all your fonts.</WarningStrong>
              <WarningText>Some fonts may be missing.</WarningText>
              <LearnMore>Learn more</LearnMore>
            </Warning>
          )}
          <FormulaBar>
            <FormulaMain>
              <NameBox>
                A1
                <svg width="7" height="17" viewBox="0 0 7 17" fill={on ? "#555" : "#8c8c8c"}><path d="M3.5 0 6.8 6H.2ZM3.5 17 .2 11H6.8Z" /></svg>
              </NameBox>
              <Tools>
                <Slot $w={30}><svg width="11" height="11" fill="none" stroke="#bdbdbd" strokeWidth="2"><path d="m.8 .8 9.4 9.4M10.2 .8 .8 10.2" /></svg></Slot>
                <Slot $w={29}><svg width="14" height="11" fill="none" stroke="#c4c4c4" strokeWidth="2"><path d="m.8 5.6 4.2 4L13.2 .8" /></svg></Slot>
                <Fx>fx</Fx>
              </Tools>
              <FormulaInput>Category</FormulaInput>
              <DropButton><svg width="7" height="6" fill="#555"><path d="M0 0H7L3.5 6Z" /></svg></DropButton>
            </FormulaMain>
          </FormulaBar>
          <ColumnHeads>
            <Corner><svg width="15" height="15" fill="#dcdcdc"><path d="M15 0V15H0Z" /></svg></Corner>
            {COLS.map((c, i) => <ColumnHead key={c} $on={on && i === 0}>{c}</ColumnHead>)}
          </ColumnHeads>
          <Sheet>
            <RowHeads>
              {Array.from({ length: rows }, (_, i) => <RowHead key={i} $on={on && i === 0}>{i + 1}</RowHead>)}
            </RowHeads>
            <Cells>
              {DATA.map(([a, b], i) => (
                <DataRow key={a}>
                  <Cell $b={i === 0}>{a}</Cell>
                  <Cell $b={i === 0} $r={i > 0}>{b}</Cell>
                </DataRow>
              ))}
            </Cells>
            {on && <Selection />}
            {CHARTS.map((c, i) => (
              <ChartBox key={c.title} $top={14 + i * 240}><Doughnut {...c} /></ChartBox>
            ))}
          </Sheet>
          <SheetTabs>
            <Arrows>
              <svg width="7" height="10" fill="#b0b0b0"><path d="M7 0V10L0 5Z" /></svg>
              <svg width="7" height="10" fill="#b0b0b0"><path d="M0 0V10L7 5Z" /></svg>
            </Arrows>
            <SheetTab>Sheet1</SheetTab>
            <AddSheet><svg width="10" height="10" stroke="#4a4a4a" strokeWidth="1.6"><path d="M5 0V10M0 5H10" /></svg></AddSheet>
          </SheetTabs>
          <Status>
            <StatusText $w={57}>Ready</StatusText>
            <Slot $w={21} $start><AccessIcon /></Slot>
            <StatusText $w={160}>Accessibility: {access}</StatusText>
            <Views>
              <ViewOn>
                <svg width="14" height="14" viewBox="0 0 14 14"><rect width="14" height="14" rx="1.5" fill="#3c3c3c" /><path d="M0 4.7H14M0 9.3H14M4.7 0V14M9.3 0V14" stroke="#b9b9b9" /></svg>
              </ViewOn>
              <Slot $w={42}>
                <svg width="12" height="16" viewBox="0 0 12 16" fill="none" stroke="#666" strokeWidth="1.1"><path d="M1.6 .6H7L11.4 5V14.4a1 1 0 0 1-1 1H1.6a1 1 0 0 1-1-1V1.6a1 1 0 0 1 1-1ZM3 7.5H9.5V12.5H3ZM3 10H9.5M5.5 7.5V12.5" /></svg>
              </Slot>
              <Slot $w={32}>
                <svg width="15" height="16" viewBox="0 0 15 16" fill="none" stroke="#666" strokeWidth="1.2"><path d="M2 0V4.6H13V0M2 16V11.4H13V16" /><path d="M0 8H15" strokeDasharray="1.5 1" stroke="#999" /></svg>
              </Slot>
              <Slot $w={16}><svg width="8" height="2"><path d="M0 1H8" stroke="#999" strokeWidth="1.6" /></svg></Slot>
              <Track><Knob /></Track>
              <Slot $w={10}><svg width="9" height="9" stroke="#555" strokeWidth="1.2"><path d="M4.5 0V9M0 4.5H9" /></svg></Slot>
              <Percent>100%</Percent>
            </Views>
          </Status>
        </Clip>
      </Frame>
    </ThemeProvider>
  );
}

export default function App() {
  return (
    <>
      <Global />
      <Desktop>
        <Excel file="chart_doughnut.xlsx" rows={66} access="Good to go" warning />
        <Excel on file="zig-chart_doughnut.xlsx" rows={68} access="Investigate" />
      </Desktop>
    </>
  );
}
